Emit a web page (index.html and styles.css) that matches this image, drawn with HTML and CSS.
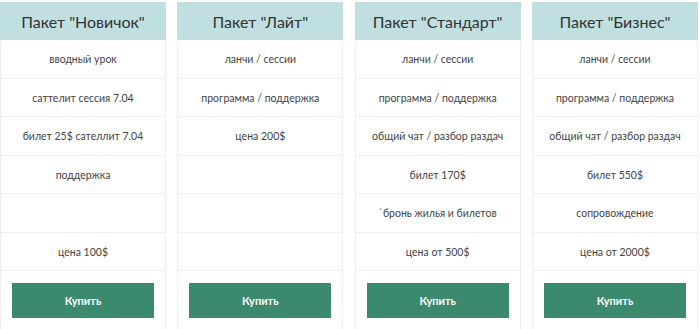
FILE: index.html
```html
<!DOCTYPE html>
<html lang="ru">
<head>
<meta charset="utf-8">
<link rel="stylesheet" href="styles.css">
</head>
<body>
<div class="plans">
  <div class="card">
    <div class="head">Пакет "Новичок"</div>
    <div class="row">вводный урок</div>
    <div class="row">саттелит сессия 7.04</div>
    <div class="row">билет 25$ сателлит 7.04</div>
    <div class="row">поддержка</div>
    <div class="row"></div>
    <div class="row">цена 100$</div>
    <div class="foot"><button class="buy">Купить</button></div>
  </div>
  <div class="card">
    <div class="head">Пакет "Лайт"</div>
    <div class="row">ланчи / сессии</div>
    <div class="row">программа / поддержка</div>
    <div class="row">цена 200$</div>
    <div class="row"></div>
    <div class="row"></div>
    <div class="row"></div>
    <div class="foot"><button class="buy">Купить</button></div>
  </div>
  <div class="card">
    <div class="head">Пакет "Стандарт"</div>
    <div class="row">ланчи / сессии</div>
    <div class="row">программа / поддержка</div>
    <div class="row">общий чат / разбор раздач</div>
    <div class="row">билет 170$</div>
    <div class="row">`бронь жилья и билетов</div>
    <div class="row">цена от 500$</div>
    <div class="foot"><button class="buy">Купить</button></div>
  </div>
  <div class="card">
    <div class="head">Пакет "Бизнес"</div>
    <div class="row">ланчи / сессии</div>
    <div class="row">программа / поддержка</div>
    <div class="row">общий чат / разбор раздач</div>
    <div class="row">билет 550$</div>
    <div class="row">сопровождение</div>
    <div class="row">цена от 2000$</div>
    <div class="foot"><button class="buy">Купить</button></div>
  </div>
</div>
</body>
</html>
```
FILE: styles.css
```css
html, body {
  margin: 0;
  padding: 0;
  background: #ffffff;
}
body {
  font-family: "Lato", "Open Sans", sans-serif;
  color: #444444;
  overflow: hidden;
}
.plans {
  display: grid;
  grid-template-columns: repeat(4, 166px);
  column-gap: 11.33px;
  padding-top: 2px;
}
.card {
  border-left: 1px solid #efefef;
  border-right: 1px solid #efefef;
  display: flex;
  flex-direction: column;
}
.head {
  background: #c0dfe0;
  height: 38px;
  display: flex;
  align-items: center;
  justify-content: center;
  font-size: 16px;
  color: #333333;
  margin: 0 -1px;
}
.row {
  box-sizing: border-box;
  height: 38.5px;
  border-bottom: 1px solid #efefef;
  display: flex;
  align-items: center;
  justify-content: center;
  font-size: 10.5px;
  padding-top: 1px;
}
.foot {
  padding: 12px 11px 20px;
}
.buy {
  display: block;
  width: 100%;
  height: 35px;
  border: none;
  background: #3b8a6e;
  color: #ffffff;
  font-family: "Lato", sans-serif;
  font-weight: bold;
  font-size: 11px;
  border-radius: 0;
}
```
